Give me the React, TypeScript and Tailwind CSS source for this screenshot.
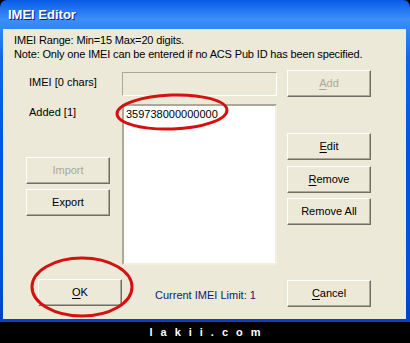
import React from "react";

const font = { fontFamily: '"Liberation Sans", Arial, sans-serif' };

function Btn({
  label,
  u,
  disabled,
  className = "",
}: {
  label: string;
  u?: number;
  disabled?: boolean;
  className?: string;
}) {
  const content =
    u === undefined ? (
      label
    ) : (
      <>
        {label.slice(0, u)}
        <span className="underline underline-offset-2">{label[u]}</span>
        {label.slice(u + 1)}
      </>
    );
  return (
    <div
      className={`flex h-[27px] w-[84px] items-center justify-center border border-t-white border-l-white border-b-[#716F64] border-r-[#716F64] bg-[#ECE9D8] text-[11px] shadow-[inset_-1px_-1px_0_#ACA899] ${
        disabled ? "text-[#ACA899]" : "text-black"
      } ${className}`}
    >
      {content}
    </div>
  );
}

export default function App() {
  return (
    <div className="flex h-[343px] w-[410px] flex-col bg-black" style={font}>
      <div className="flex h-[322px] flex-col rounded-t-[7px] bg-[linear-gradient(to_bottom,#0A5BE8_0%,#3C8EF8_6%,#1764EA_18%,#0054E3_45%,#0050DC_85%,#0040C6_100%)]">
        <div className="flex h-[29px] items-center pl-[8px] text-[13px] font-bold text-white [text-shadow:1px_1px_0_#0A1E80]">
          IMEI Editor
        </div>
        <div className="mb-[3px] ml-[3px] mr-[4px] flex flex-1 flex-col bg-[#ECE9D8] text-[11px] text-black">
          <div className="pl-[11px] pt-[4px] leading-[14px] tracking-[-0.15px]">
            <div>IMEI Range: Min=15 Max=20 digits.</div>
            <div>Note: Only one IMEI can be entered if no ACS Pub ID has been specified.</div>
          </div>
          <div className="mt-[9px] flex">
            <div className="flex w-[119px] flex-col pl-[23px]">
              <div className="mt-[5px] pl-[3px] leading-[14px]">IMEI [0 chars]</div>
              <div className="mt-[16px] pl-[3px] leading-[14px]">Added [1]</div>
              <Btn label="Import" disabled className="mt-[38px]" />
              <Btn label="Export" className="mt-[5px]" />
            </div>
            <div className="flex w-[155px] flex-col">
              <div className="mt-[2px] h-[24px] border border-t-[#ACA899] border-l-[#ACA899] border-b-white border-r-white bg-[#ECE9D8]" />
              <div className="mt-[8px] h-[161px] border-2 border-t-[#ACA899] border-l-[#ACA899] border-b-[#F1EFE2] border-r-[#F1EFE2] bg-white pl-[2px] pt-[1px] leading-[14px]">
                359738000000000
              </div>
            </div>
            <div className="ml-[10px] flex flex-col">
              <Btn label="Add" u={0} disabled />
              <Btn label="Edit" u={0} className="mt-[36px]" />
              <Btn label="Remove" u={0} className="mt-[6px]" />
              <Btn label="Remove All" className="mt-[5px]" />
            </div>
          </div>
          <div className="mt-[12px] flex items-center">
            <Btn label="OK" u={0} className="ml-[35px]" />
            <div className="ml-[33px] mt-[6px] text-[#0A246A]">Current IMEI Limit: 1</div>
            <Btn label="Cancel" u={0} className="ml-auto mr-[35px] mt-[3px]" />
          </div>
        </div>
      </div>
      <div className="flex flex-1 items-center justify-center pl-[8px] text-[11px] font-bold tracking-[8px] text-white">
        lakii.com
      </div>
      <svg className="pointer-events-none absolute left-0 top-0" width="410" height="343">
        <ellipse cx="172" cy="112" rx="55" ry="17" fill="none" stroke="#D41010" strokeWidth="3" transform="rotate(-2 172 112)" />
        <ellipse cx="82" cy="287" rx="50" ry="29" fill="none" stroke="#D41010" strokeWidth="3" />
      </svg>
    </div>
  );
}
